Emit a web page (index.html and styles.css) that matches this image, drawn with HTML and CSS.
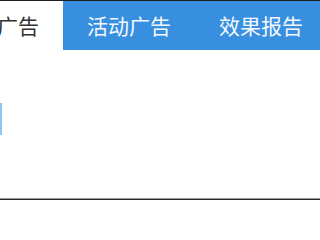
FILE: index.html
```html
<!DOCTYPE html>
<html lang="zh">
<head>
<meta charset="utf-8">
<link rel="stylesheet" href="styles.css">
</head>
<body>
<div class="page">
  <nav class="tabs">
    <div class="tab active">全部广告</div>
    <div class="tab">活动广告</div>
    <div class="tab">效果报告</div>
  </nav>
  <main class="content">
    <div class="btn-edge"></div>
  </main>
  <div class="bottom-rule"></div>
</div>
</body>
</html>
```

FILE: styles.css
```css
html, body {
  margin: 0;
  padding: 0;
  background: #fff;
}
.page {
  width: 320px;
  height: 200px;
  overflow: hidden;
  display: flex;
  flex-direction: column;
  border-top: 1px solid #1e1e1e;
  box-sizing: border-box;
  font-family: "Noto Sans CJK SC", "Noto Sans", sans-serif;
}
.tabs {
  display: flex;
  height: 49px;
  margin-left: -69px;
  background: #388fe0;
  flex: none;
}
.tab {
  width: 132px;
  flex: none;
  text-align: center;
  line-height: 49px;
  font-size: 21px;
  color: #f4f8fd;
}
.tab.active {
  background: #fff;
  color: #333;
}
.content {
  flex: 1;
  padding-top: 53px;
}
.btn-edge {
  width: 80px;
  height: 32px;
  margin-left: -80px;
  border-right: 2px solid #8ec5f3;
  background: #fff;
}
.bottom-rule {
  height: 0;
  flex: none;
  border-top: 1px solid #9a9a9a;
  border-bottom: 1px solid #2a2a2a;
}
```
